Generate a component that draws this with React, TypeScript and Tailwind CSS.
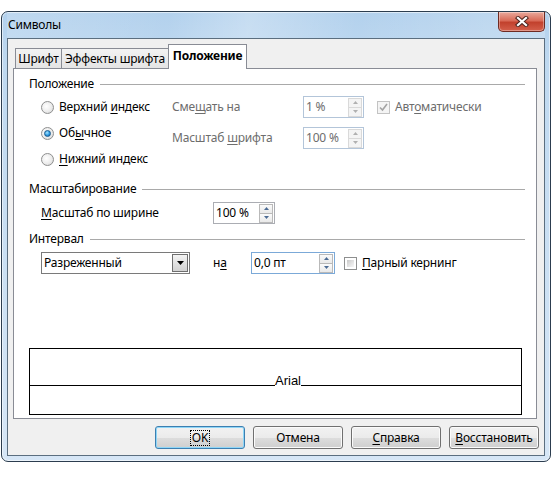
import type { ReactNode } from "react";

// ---------------------------------------------------------------------------
// Small bits
// ---------------------------------------------------------------------------
function Key({ children }: { children: ReactNode }) {
  return <span className="underline decoration-1 underline-offset-[2px]">{children}</span>;
}

function Group({ title }: { title: string }) {
  return (
    <div className="flex h-[16px] items-center gap-[6px] pr-[11px]">
      <span>{title}</span>
      <div className="h-px flex-1 bg-[#a9a9a9]" />
    </div>
  );
}

function Radio({ checked }: { checked?: boolean }) {
  return (
    <span className="flex h-[13px] w-[13px] shrink-0 items-center justify-center rounded-full border border-[#8e8f8f] bg-[radial-gradient(circle_at_40%_40%,#ffffff_0%,#ececec_55%,#cdcdcd_100%)]">
      {checked && (
        <span className="h-[7px] w-[7px] rounded-full border border-[#1a5b8e] bg-[radial-gradient(circle_at_40%_35%,#a8e6ff_0%,#2e9be4_55%,#0e5898_100%)]" />
      )}
    </span>
  );
}

function Check({ checked, disabled }: { checked?: boolean; disabled?: boolean }) {
  return (
    <span
      className={`flex h-[13px] w-[13px] shrink-0 items-center justify-center border ${
        disabled ? "border-[#c3c3c3] bg-[#f4f4f4]" : "border-[#8e8f8f] bg-white p-[2px]"
      }`}>
      {checked ? (
        <svg width="9" height="9" viewBox="0 0 9 9">
          <path d="M1 4.5 L3.5 7 L8 1" fill="none" stroke="#a3a3a3" strokeWidth="1.6" />
        </svg>
      ) : (
        <span className="h-full w-full bg-[linear-gradient(135deg,#c9c9c9_0%,#e6e6e6_60%,#f7f7f7_100%)]" />
      )}
    </span>
  );
}

function Arrow({ up, color }: { up?: boolean; color: string }) {
  return (
    <svg width="5" height="3" viewBox="0 0 5 3">
      <path d={up ? "M0 3 L2.5 0 L5 3 Z" : "M0 0 L5 0 L2.5 3 Z"} fill={color} />
    </svg>
  );
}

type SpinVariant = "disabled" | "normal" | "focus";

function Spin({ value, width, variant }: { value: string; width: string; variant: SpinVariant }) {
  const border =
    variant === "disabled"
      ? "border-[#b3c5d9]"
      : variant === "focus"
        ? "border-[#7ba9d8]"
        : "border-[#abadb3]";
  const btn =
    variant === "disabled"
      ? "border-[#d9d9d9] bg-[#f4f4f4]"
      : "border-[#b9b9b9] bg-[linear-gradient(180deg,#fbfbfb,#e9e9e9)]";
  const arrow = variant === "disabled" ? "#b0b0b0" : "#4c6b94";
  return (
    <div className={`flex h-[22px] ${width} shrink-0 items-center border ${border} bg-white pl-[2px] pr-px`}>
      <span className={`flex-1 ${variant === "disabled" ? "text-[#6d6d6d]" : ""}`}>{value}</span>
      <div className="flex flex-col">
        <span className={`flex h-[10px] w-[14px] items-center justify-center border ${btn}`}>
          <Arrow up color={arrow} />
        </span>
        <span className={`-mt-px flex h-[10px] w-[14px] items-center justify-center border ${btn}`}>
          <Arrow color={arrow} />
        </span>
      </div>
    </div>
  );
}

function Button({ children, primary }: { children: ReactNode; primary?: boolean }) {
  return (
    <div
      className={`flex h-[23px] w-[90px] items-center justify-center rounded-[3px] border bg-[linear-gradient(180deg,#f2f2f2_0%,#ebebeb_50%,#dddddd_51%,#cfcfcf_100%)] ${
        primary
          ? "border-[#3c7fb1] shadow-[inset_0_0_0_1px_#8fd6f7]"
          : "border-[#707070] shadow-[inset_0_0_0_1px_#fbfbfb]"
      }`}>
      {children}
    </div>
  );
}

// ---------------------------------------------------------------------------
// Dialog
// ---------------------------------------------------------------------------
export default function App() {
  return (
    <div className="h-[483px] w-[552px] bg-white pt-[11px] pl-px font-['Noto_Sans',sans-serif] text-[12px] leading-[16px] tracking-[-0.2px] text-black">
      <div className="flex h-[451px] w-[550px] flex-col rounded-[7px] border border-[#2c3d4f] bg-[linear-gradient(180deg,#b3d1ed_0%,#bfd9f0_12%,#d6e6f6_100%)] px-[5px] pb-[5px] shadow-[inset_0_0_0_1px_rgba(255,255,255,0.55)]">
        {/* title bar */}
        <div className="flex h-[26px] items-start justify-between bg-[linear-gradient(100deg,rgba(255,255,255,0.15)_0%,rgba(255,255,255,0)_30%,rgba(255,255,255,0.25)_45%,rgba(255,255,255,0)_65%,rgba(255,255,255,0.2)_100%)]">
          <span className="pl-px pt-[5px]">Символы</span>
          <div className="flex h-[20px] w-[47px] items-center justify-center rounded-b-[5px] border border-t-0 border-[#6e2a22] bg-[linear-gradient(180deg,#e9a99c_0%,#d96b58_45%,#c2412d_55%,#d4604c_100%)] shadow-[inset_0_0_0_1px_rgba(255,255,255,0.35)]">
            <svg width="14" height="11" viewBox="0 0 14 11">
              <path d="M3 2 L11 9 M11 2 L3 9" stroke="#4e2620" strokeWidth="4.2" strokeLinecap="square" />
              <path d="M3 2 L11 9 M11 2 L3 9" stroke="#ffffff" strokeWidth="2.2" strokeLinecap="square" />
            </svg>
          </div>
        </div>

        {/* client area */}
        <div className="flex flex-1 flex-col border border-[#5b6e7f] bg-[#f0f0f0]">
          {/* tabs */}
          <div className="ml-[5px] mr-[7px] flex h-[29px] items-end pl-[2px] pt-[5px]">
            <div className="flex h-[20px] w-[47px] items-center justify-center border border-b-0 border-[#898c95] bg-[linear-gradient(180deg,#f3f3f3,#e4e4e4)]">
              Шрифт
            </div>
            <div className="-ml-px flex h-[20px] w-[108px] items-center justify-center border border-b-0 border-[#898c95] bg-[linear-gradient(180deg,#f3f3f3,#e4e4e4)]">
              Эффекты шрифта
            </div>
            <div className="relative z-10 -mb-px -ml-px flex h-[25px] w-[79px] items-center justify-center border border-b-0 border-[#898c95] bg-white pb-[2px] font-bold">
              Положение
            </div>
          </div>

          {/* panel */}
          <div className="ml-[5px] mr-[7px] flex h-[351px] flex-col border border-[#898c95] bg-white pl-[15px] pt-[7px]">
            <Group title="Положение" />
            <div className="mt-[2px] flex pl-[12px]">
              <div className="flex w-[131px] flex-col">
                <div className="flex h-[26px] items-center gap-[5px]">
                  <Radio />
                  <span>
                    Верхний <Key>и</Key>ндекс
                  </span>
                </div>
                <div className="flex h-[26px] items-center gap-[5px]">
                  <Radio checked />
                  <span>
                    Об<Key>ы</Key>чное
                  </span>
                </div>
                <div className="flex h-[26px] items-center gap-[5px]">
                  <Radio />
                  <span>
                    <Key>Н</Key>ижний индекс
                  </span>
                </div>
              </div>
              <div className="mt-[2px] flex flex-col gap-[9px] text-[#6d6d6d]">
                <div className="flex items-center">
                  <span className="w-[131px]">
                    Сме<Key>щ</Key>ать на
                  </span>
                  <Spin value="1 %" width="w-[61px]" variant="disabled" />
                  <div className="ml-[13px] flex items-center gap-[5px]">
                    <Check checked disabled />
                    <span>
                      Авт<Key>о</Key>матически
                    </span>
                  </div>
                </div>
                <div className="flex items-center">
                  <span className="w-[131px]">
                    Масштаб <Key>ш</Key>рифта
                  </span>
                  <Spin value="100 %" width="w-[61px]" variant="disabled" />
                </div>
              </div>
            </div>

            <div className="mt-[9px]">
              <Group title="Масштабирование" />
            </div>
            <div className="mt-[5px] flex items-center pl-[12px]">
              <span className="w-[172px]">
                <Key>М</Key>асштаб по ширине
              </span>
              <Spin value="100 %" width="w-[62px]" variant="normal" />
            </div>

            <div className="mt-[7px]">
              <Group title="Интервал" />
            </div>
            <div className="mt-[5px] flex items-center pl-[12px]">
              <div className="flex h-[22px] w-[149px] items-center border border-[#7a7a7a] bg-white pl-[2px] pr-px">
                <span className="flex-1">Разреженный</span>
                <span className="flex h-[18px] w-[16px] items-center justify-center border border-[#6f6f6f] bg-[linear-gradient(180deg,#f4f4f4_0%,#e2e2e2_50%,#d2d2d2_100%)]">
                  <svg width="7" height="4" viewBox="0 0 7 4">
                    <path d="M0 0 L7 0 L3.5 4 Z" fill="#000" />
                  </svg>
                </span>
              </div>
              <span className="ml-[23px] w-[38px]">
                н<Key>а</Key>
              </span>
              <Spin value="0,0 пт" width="w-[84px]" variant="focus" />
              <div className="ml-[9px] flex items-center gap-[5px]">
                <Check />
                <span>
                  <Key>П</Key>арный кернинг
                </span>
              </div>
            </div>

            {/* preview */}
            <div className="mt-[74px] flex h-[67px] w-[493px] flex-col border border-black bg-white">
              <div className="h-[25px]" />
              <div className="flex h-[12px] items-end">
                <div className="h-px w-[245px] bg-black" />
                <span className="font-['Liberation_Sans',Arial,sans-serif] text-[13px] leading-[11px] tracking-normal">Arial</span>
                <div className="h-px flex-1 bg-black" />
              </div>
            </div>
          </div>

          {/* buttons */}
          <div className="mt-[7px] flex justify-end gap-[8px] pr-[5px]">
            <Button primary>
              <span className="border border-dotted border-black px-px leading-[14px]">OK</span>
            </Button>
            <Button>Отмена</Button>
            <Button>
              <span>
                <Key>С</Key>правка
              </span>
            </Button>
            <Button>
              <span>
                <Key>В</Key>осстановить
              </span>
            </Button>
          </div>
        </div>
      </div>
    </div>
  );
}
